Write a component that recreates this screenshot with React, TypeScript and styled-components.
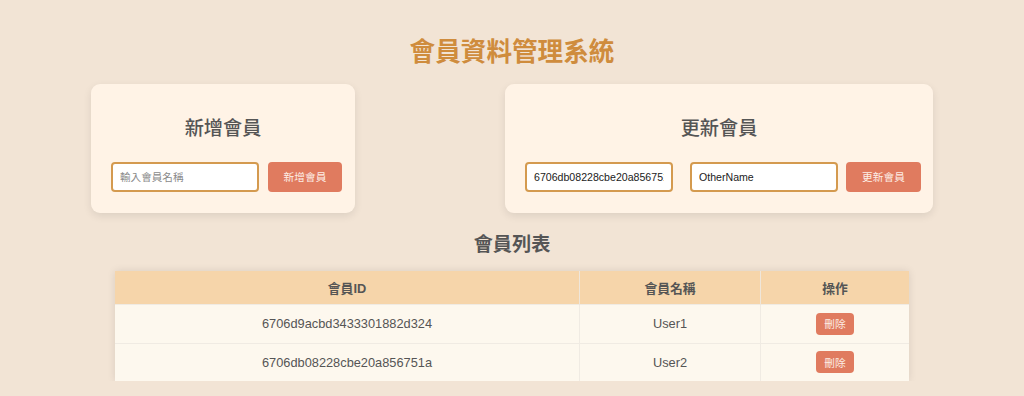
import React from "react";
import styled, { createGlobalStyle } from "styled-components";

const GlobalStyle = createGlobalStyle`
  html, body {
    margin: 0;
    padding: 0;
    background: #f2e4d5;
    font-family: "Liberation Sans", "Noto Sans CJK TC", Arial, sans-serif;
    color: #555;
  }
`;

const Page = styled.div`
  display: flex;
  flex-direction: column;
  align-items: center;
  padding-top: 35px;
`;

const Title = styled.h1`
  margin: 0 0 19px;
  font-family: "Noto Sans CJK TC", sans-serif;
  font-size: 25.6px;
  line-height: 30px;
  font-weight: 700;
  color: #cf8c3d;
`;

const CardRow = styled.div`
  display: flex;
  gap: 150px;
  justify-content: center;
`;

const Card = styled.div<{ $w: number }>`
  width: ${(p) => p.$w}px;
  box-sizing: border-box;
  background: #fff3e6;
  border-radius: 9px;
  box-shadow: 0 3px 8px rgba(0, 0, 0, 0.09);
  padding: 20px 0 21px 20px;
  display: flex;
  flex-direction: column;
  align-items: stretch;
`;

const CardTitle = styled.h2`
  margin: 12px 20px 23px 0;
  text-align: center;
  font-family: "Noto Sans CJK TC", sans-serif;
  font-size: 19.2px;
  line-height: 23px;
  font-weight: 500;
  color: #555;
`;

const FormRow = styled.div`
  display: flex;
  align-items: center;
`;

const Input = styled.input<{ $gap: number }>`
  width: 148px;
  height: 30px;
  box-sizing: border-box;
  margin-right: ${(p) => p.$gap}px;
  padding: 0 7px;
  border: 2px solid #d49a4f;
  border-radius: 4px;
  background: #fff;
  font-family: "Liberation Sans", "Noto Sans CJK TC", sans-serif;
  font-size: 10.6px;
  color: #222;
  outline: none;
  &::placeholder {
    color: #8a8a8a;
  }
`;

const Button = styled.button<{ $w: number }>`
  width: ${(p) => p.$w}px;
  height: 30px;
  margin-top: -1px;
  border: none;
  border-radius: 4px;
  background: #e07b5f;
  color: #fdeee6;
  font-family: "Noto Sans CJK TC", sans-serif;
  font-size: 10.7px;
  padding: 0;
  cursor: pointer;
`;

const SectionTitle = styled.h2`
  margin: 18px 0 16px;
  font-family: "Noto Sans CJK TC", sans-serif;
  font-size: 19.2px;
  line-height: 24px;
  font-weight: 700;
  color: #555;
`;

const Table = styled.table`
  width: 792px;
  border-collapse: collapse;
  background: #fdf8ee;
  box-shadow: 0 0 8px rgba(0, 0, 0, 0.1);
  table-layout: fixed;
`;

const Th = styled.th<{ $w: number }>`
  width: ${(p) => p.$w}px;
  height: 33px;
  padding: 0;
  background: #f6d5aa;
  border-left: 1px solid #efe6da;
  font-family: "Liberation Sans", "Noto Sans CJK TC", sans-serif;
  font-size: 12.8px;
  font-weight: 700;
  color: #555;
  &:first-child {
    border-left: none;
  }
`;

const Td = styled.td`
  height: 37.5px;
  padding: 0;
  text-align: center;
  border-top: 1px solid #f0ebe3;
  border-left: 1px solid #f0ebe3;
  font-size: 12.8px;
  color: #555;
  &:first-child {
    border-left: none;
  }
`;

const DeleteButton = styled.button`
  height: 22px;
  padding: 0 8px;
  border: none;
  border-radius: 4px;
  background: #e07b5f;
  color: #fdeee6;
  font-family: "Noto Sans CJK TC", sans-serif;
  font-size: 10.7px;
  cursor: pointer;
`;

const members = [
  { id: "6706d9acbd3433301882d324", name: "User1" },
  { id: "6706db08228cbe20a856751a", name: "User2" },
];

export default function App() {
  return (
    <>
      <GlobalStyle />
      <Page>
        <Title>會員資料管理系統</Title>
        <CardRow>
          <Card $w={264}>
            <CardTitle>新增會員</CardTitle>
            <FormRow>
              <Input $gap={9} placeholder="輸入會員名稱" />
              <Button $w={74}>新增會員</Button>
            </FormRow>
          </Card>
          <Card $w={428}>
            <CardTitle>更新會員</CardTitle>
            <FormRow>
              <Input $gap={17} defaultValue="6706db08228cbe20a856751a" />
              <Input $gap={8} defaultValue="OtherName" />
              <Button $w={75}>更新會員</Button>
            </FormRow>
          </Card>
        </CardRow>
        <SectionTitle>會員列表</SectionTitle>
        <Table>
          <thead>
            <tr>
              <Th $w={464}>會員ID</Th>
              <Th $w={180}>會員名稱</Th>
              <Th $w={148}>操作</Th>
            </tr>
          </thead>
          <tbody>
            {members.map((m) => (
              <tr key={m.id}>
                <Td>{m.id}</Td>
                <Td>{m.name}</Td>
                <Td>
                  <DeleteButton>刪除</DeleteButton>
                </Td>
              </tr>
            ))}
          </tbody>
        </Table>
      </Page>
    </>
  );
}
